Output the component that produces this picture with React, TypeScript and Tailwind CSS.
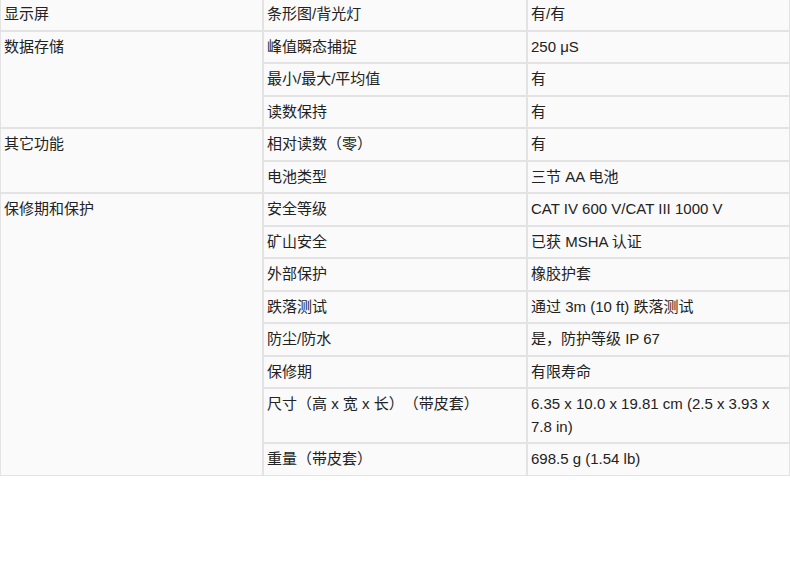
import { FC } from "react";

type Group = {
  title: string;
  rows: [string, string][];
};

const groups: Group[] = [
  { title: "显示屏", rows: [["条形图/背光灯", "有/有"]] },
  {
    title: "数据存储",
    rows: [
      ["峰值瞬态捕捉", "250 μS"],
      ["最小/最大/平均值", "有"],
      ["读数保持", "有"],
    ],
  },
  {
    title: "其它功能",
    rows: [
      ["相对读数（零）", "有"],
      ["电池类型", "三节 AA 电池"],
    ],
  },
  {
    title: "保修期和保护",
    rows: [
      ["安全等级", "CAT IV 600 V/CAT III 1000 V"],
      ["矿山安全", "已获 MSHA 认证"],
      ["外部保护", "橡胶护套"],
      ["跌落测试", "通过 3m (10 ft) 跌落测试"],
      ["防尘/防水", "是，防护等级 IP 67"],
      ["保修期", "有限寿命"],
      ["尺寸（高 x 宽 x 长）（带皮套）", "6.35 x 10.0 x 19.81 cm (2.5 x 3.93 x 7.8 in)"],
      ["重量（带皮套）", "698.5 g (1.54 lb)"],
    ],
  },
];

const cell =
  "border border-[#e3e3e3] bg-[#fafafa] pl-[3px] pr-[4px] py-[4px] align-top text-left font-normal";

const App: FC = () => {
  return (
    <div
      className="w-[790px] h-[584px] overflow-hidden bg-white text-[#222] text-[15px] leading-[22.5px] [text-spacing-trim:space-all]"
      style={{ fontFamily: '"Liberation Sans", Arial, "Noto Sans CJK SC", sans-serif' }}
    >
      <table className="-mt-[2px] w-[790px] table-fixed border-separate border-spacing-0">
        <colgroup>
          <col className="w-[263px]" />
          <col className="w-[264px]" />
          <col className="w-[263px]" />
        </colgroup>
        <tbody>
          {groups.map((g) =>
            g.rows.map(([label, value], i) => (
              <tr key={g.title + label}>
                {i === 0 && (
                  <td className={cell} rowSpan={g.rows.length}>
                    {g.title}
                  </td>
                )}
                <td className={cell}>{label}</td>
                <td className={cell}>{value}</td>
              </tr>
            ))
          )}
        </tbody>
      </table>
    </div>
  );
};

export default App;
